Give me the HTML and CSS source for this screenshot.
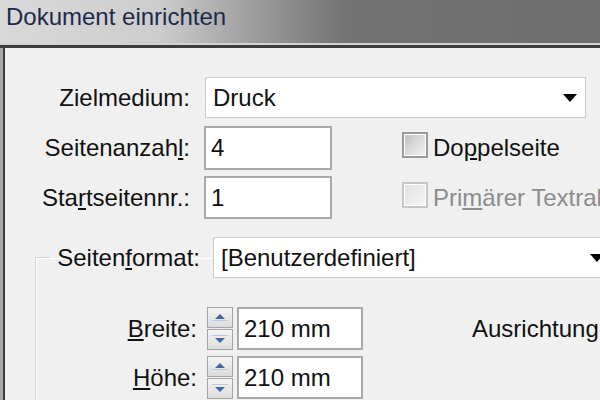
FILE: index.html
```html
<!DOCTYPE html>
<html lang="de">
<head>
    <meta charset="UTF-8">
    <title>Dokument einrichten</title>
    <link rel="stylesheet" href="styles.css">
</head>
<body>
    <div class="window">
        <div class="titlebar">Dokument einrichten</div>
        <div class="title-rule"></div>

        <div class="frame">
            <div class="content">
                <div class="row row-medium">
                    <div class="label">Zielmedium:</div>
                    <div class="select select-medium">
                        <span>Druck</span>
                        <span class="arrow"></span>
                    </div>
                </div>

                <div class="row row-pages">
                    <div class="label">Seitenanzah<u>l</u>:</div>
                    <div class="field">4</div>
                    <div class="check">
                        <span class="box"></span>
                        <span>Do<u>p</u>pelseite</span>
                    </div>
                </div>

                <div class="row row-start">
                    <div class="label">Sta<u>r</u>tseitennr.:</div>
                    <div class="field">1</div>
                    <div class="check disabled">
                        <span class="box"></span>
                        <span>Pri<u>m</u>ärer Textrahmen</span>
                    </div>
                </div>

                <fieldset class="group">
                    <legend class="group-title">
                        <span class="label format-label">Seiten<u>f</u>ormat:</span>
                        <span class="select select-format">
                            <span>[Benutzerdefiniert]</span>
                            <span class="arrow"></span>
                        </span>
                    </legend>

                    <div class="row size-row size-first">
                        <div class="label size-label"><u>B</u>reite:</div>
                        <div class="spinner">
                            <span class="spin up"></span>
                            <span class="spin down"></span>
                        </div>
                        <div class="field size-field">210 mm</div>
                        <div class="orient">Ausrichtung:</div>
                    </div>

                    <div class="row size-row">
                        <div class="label size-label"><u>H</u>öhe:</div>
                        <div class="spinner">
                            <span class="spin up"></span>
                            <span class="spin down"></span>
                        </div>
                        <div class="field size-field">210 mm</div>
                    </div>
                </fieldset>
            </div>
        </div>
    </div>
</body>
</html>
```

FILE: styles.css
```css
html, body {
    margin: 0;
    padding: 0;
    width: 600px;
    height: 400px;
    overflow: hidden;
}

body {
    font-family: "Liberation Sans", Arial, sans-serif;
    font-size: 24px;
    color: #111;
    background-color: #f0f0f0;
}

.window {
    width: 720px;
    height: 400px;
}

.titlebar {
    height: 43px;
    line-height: 34px;
    padding-left: 6px;
    font-size: 24px;
    color: #1c2b4c;
    background: linear-gradient(to right, #d9d9d9 0%, #cdcdcd 22%, #9a9a9a 36%, #737373 48%, #6e6e6e 80%, #747474 100%);
}

.title-rule {
    height: 2px;
    background-color: #d2d2d2;
    border-bottom: 3px solid #3d3d3d;
}

.frame {
    height: 360px;
    border-left: 3px solid #a9a9a9;
}

.content {
    height: 100%;
    border-left: 2px solid #3d3d3d;
    padding-top: 29px;
    background-color: #f0f0f0;
}

.row {
    display: flex;
    align-items: center;
}

.label {
    width: 185px;
    text-align: right;
    flex-shrink: 0;
}

.select {
    display: flex;
    align-items: center;
    justify-content: space-between;
    box-sizing: border-box;
    height: 41px;
    padding: 0 8px 0 7px;
    background-color: #fff;
    border: 1px solid #cbcbcb;
}

.select-medium {
    width: 381px;
    margin-left: 15px;
}

.arrow {
    width: 0;
    height: 0;
    border-left: 7px solid transparent;
    border-right: 7px solid transparent;
    border-top: 8px solid #000;
}

.field {
    box-sizing: border-box;
    width: 128px;
    height: 44px;
    line-height: 40px;
    padding-left: 5px;
    margin-left: 14px;
    background-color: #fff;
    border: 2px solid #a9a9a9;
}

.row-pages {
    margin-top: 8px;
}

.row-start {
    margin-top: 6px;
}

.row-start .field {
    height: 43px;
    line-height: 39px;
}

.check {
    display: flex;
    align-items: center;
    margin-left: 70px;
    white-space: nowrap;
}

.check .box {
    box-sizing: border-box;
    width: 26px;
    height: 26px;
    margin-right: 5px;
    margin-top: -6px;
    border: 2px solid #9a9a9a;
    box-shadow: inset 0 0 0 1px #fff;
    background: linear-gradient(135deg, #bdbdbd 0%, #dedede 55%, #f2f2f2 100%);
}

.check.disabled {
    color: #8c8c8c;
}

.check.disabled .box {
    border-color: #c6c6c6;
    background: linear-gradient(135deg, #e2e2e2 0%, #f4f4f4 100%);
}

.group {
    width: 700px;
    height: 200px;
    margin: 18px 0 0 30px;
    padding: 0;
    border: 1px solid #d0d8dc;
    border-right: none;
    box-shadow: inset 1px 1px 0 #fff;
}

.group-title {
    display: flex;
    align-items: center;
    margin-left: 14px;
    padding: 0;
}

.format-label {
    width: 150px;
}

.select-format {
    width: 400px;
    margin-left: 13px;
}

.size-row {
    margin-top: 6px;
}

.size-first {
    margin-top: 29px;
}

.size-label {
    width: 161px;
}

.spinner {
    display: flex;
    flex-direction: column;
    gap: 1px;
    width: 26px;
    margin-left: 10px;
}

.spin {
    position: relative;
    box-sizing: border-box;
    height: 21px;
    border: 1px solid #a4a4a4;
    background: linear-gradient(#f4f4f4, #dcdcdc);
}

.spin::before {
    content: "";
    position: absolute;
    left: 7px;
    width: 0;
    height: 0;
    border-left: 5px solid transparent;
    border-right: 5px solid transparent;
}

.spin::after {
    content: "";
    position: absolute;
    left: 4px;
    right: 4px;
    height: 1px;
    background-color: #b9c9de;
}

.spin.up::before {
    top: 6px;
    border-bottom: 5px solid #3f6aa8;
}

.spin.up::after {
    top: 12px;
}

.spin.down::before {
    top: 8px;
    border-top: 5px solid #3f6aa8;
}

.spin.down::after {
    top: 5px;
}

.size-field {
    width: 126px;
    height: 43px;
    line-height: 39px;
    margin-left: 4px;
}

.orient {
    margin-left: 109px;
    white-space: nowrap;
}
```
